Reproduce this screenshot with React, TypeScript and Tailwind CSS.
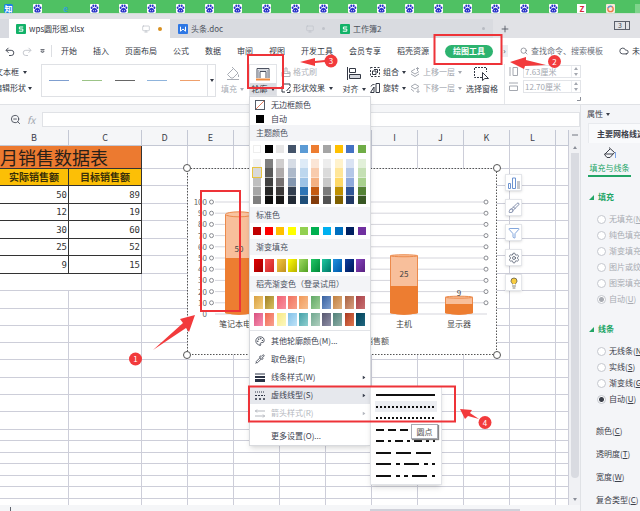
import React from 'react';
import { Brush, Cloud, Filter, Lightbulb, Monitor, Palette, Pipette, Plus, Search, Settings, ZoomOut } from 'lucide-react';
import { clsx } from 'clsx';

const menuTabs = ['开始', '插入', '页面布局', '公式', '数据', '审阅', '视图', '开发工具', '会员专享', '稻壳资源'];

const favicons = ['知', 'paw', 'e', ...Array(17).fill('paw'), 'Z', 'ring', 'leaf'];

const galleryLines = ['bg-[#7f9fd0]', 'bg-[#9cc487]', 'bg-[#666666]', 'bg-[#8fb4dc]', 'bg-[#efa06c]'];

const themeColors = ['bg-white', 'bg-black', 'bg-[#e7e6e6]', 'bg-[#44546a]', 'bg-[#5b9bd5]', 'bg-[#ed7d31]', 'bg-[#a5a5a5]', 'bg-[#ffc000]', 'bg-[#4472c4]', 'bg-[#70ad47]'];

const shades = [
  ['bg-[#f2f2f2]', 'bg-[#7f7f7f]', 'bg-[#d0cece]', 'bg-[#d6dce5]', 'bg-[#deebf7]', 'bg-[#fbe5d6]', 'bg-[#ededed]', 'bg-[#fff2cc]', 'bg-[#dae3f3]', 'bg-[#e2f0d9]'],
  ['bg-[#d9d9d9]', 'bg-[#595959]', 'bg-[#afabab]', 'bg-[#adb9ca]', 'bg-[#bdd7ee]', 'bg-[#f8cbad]', 'bg-[#dbdbdb]', 'bg-[#ffe699]', 'bg-[#b4c7e7]', 'bg-[#c5e0b4]'],
  ['bg-[#bfbfbf]', 'bg-[#404040]', 'bg-[#767171]', 'bg-[#8497b0]', 'bg-[#9dc3e6]', 'bg-[#f4b183]', 'bg-[#c9c9c9]', 'bg-[#ffd966]', 'bg-[#8faadc]', 'bg-[#a9d18e]'],
  ['bg-[#a6a6a6]', 'bg-[#262626]', 'bg-[#3b3838]', 'bg-[#333f50]', 'bg-[#2e75b6]', 'bg-[#c55a11]', 'bg-[#7b7b7b]', 'bg-[#bf9000]', 'bg-[#2f5597]', 'bg-[#548235]'],
  ['bg-[#7f7f7f]', 'bg-[#0d0d0d]', 'bg-[#181717]', 'bg-[#222a35]', 'bg-[#1f4e79]', 'bg-[#843c0c]', 'bg-[#525252]', 'bg-[#7f6000]', 'bg-[#203864]', 'bg-[#385723]'],
];

const standardColors = ['bg-[#c00000]', 'bg-[#ff0000]', 'bg-[#ffc000]', 'bg-[#ffff00]', 'bg-[#92d050]', 'bg-[#00b050]', 'bg-[#00b0f0]', 'bg-[#0070c0]', 'bg-[#002060]', 'bg-[#7030a0]'];

const gradients = [
  'from-[#e00000] to-[#a00000]', 'from-[#f55050] to-[#d02020]', 'from-[#f5c840] to-[#c09020]', 'from-[#ffff00] to-[#b8b000]', 'from-[#a0dc60] to-[#50a020]',
  'from-[#20c868] to-[#008838]', 'from-[#20c8a0] to-[#007868]', 'from-[#2090e0] to-[#0058a8]', 'from-[#1040a0] to-[#001858]', 'from-[#8844c0] to-[#582080]',
];

const shellGradients = [
  ['from-[#d8a040] to-[#f4d080]', 'from-[#a08020] to-[#d8c060]', 'from-[#f06070] to-[#f890a0]', 'from-[#f07060] to-[#f8a088]', 'from-[#f09858] to-[#f8c090]', 'from-[#60a868] to-[#a0d098]', 'from-[#3860a0] to-[#80a0d0]', 'from-[#c08040] to-[#e0b080]', 'from-[#a86040] to-[#d8a080]', 'from-[#a84048] to-[#c87070]'],
  ['from-[#d85080] to-[#f890b0]', 'from-[#f06850] to-[#f8a090]', 'from-[#f8e880] to-[#fcf8c0]', 'from-[#80c0e8] to-[#c0e4f8]', 'from-[#40a0a8] to-[#90d0d0]', 'from-[#70a890] to-[#b0d0c0]', 'from-[#585870] to-[#9090a8]', 'from-[#508078] to-[#90b0a8]', 'from-[#a83820] to-[#e07850]', 'from-[#004058] to-[#206880]'],
];

const dashes = [
  { name: '实线', pattern: '' },
  { name: '圆点', pattern: '2 2' },
  { name: '方点', pattern: '2 2' },
  { name: '短划线', pattern: '8 4' },
  { name: '划线点', pattern: '8 4 3 4' },
  { name: '长划线', pattern: '15 5' },
  { name: '长划线点', pattern: '15 5 4 4' },
  { name: '长划线点点', pattern: '15 5 4 4 4 4' },
];

const columns = ['B', 'C', 'D', 'E', 'F', 'G', 'H', 'I', 'J', 'K', 'L', ''];
const sales = [[50, 89], [12, 19], [30, 60], [25, 52], [9, 15]];
const emptyRows = [
  'h-[17px]', 'h-[18px]', 'h-[17px]', 'h-[17px]', 'h-[17px]', 'h-[18px]', 'h-[17px]', 'h-[17px]', 'h-[18px]',
  'h-[11px]', 'h-[12px]', 'h-[11px]', 'h-[12px]', 'h-[11px]', 'h-[12px]', 'h-[8px]',
];

const bars = [
  { label: '笔记本电脑', x: 52, actual: 50, target: 89 },
  { label: '主机', x: 217, actual: 25, target: 52 },
  { label: '显示器', x: 272, actual: 9, target: 15 },
];

function Caret({ className }: { className?: string }) {
  return (
    <svg viewBox="0 0 4 3" className={clsx('w-1 h-[3px] shrink-0 fill-current', className)}>
      <path d="M0 0h4L2 3z" />
    </svg>
  );
}

function Favicon({ kind }: { kind: string }) {
  if (kind === 'paw') {
    return (
      <svg viewBox="0 0 9 9" className="w-[9px] h-[9px] shrink-0">
        <rect width="9" height="9" rx="1" fill="#fff" />
        <g fill="#2a34c8">
          <ellipse cx="1.6" cy="3.8" rx="1" ry="1.3" />
          <ellipse cx="3.3" cy="1.8" rx="1" ry="1.4" />
          <ellipse cx="5.7" cy="1.8" rx="1" ry="1.4" />
          <ellipse cx="7.4" cy="3.8" rx="1" ry="1.3" />
          <path d="M4.5 3.8c1.3 0 1.6 1.2 2.6 2 1 1 .4 2.6-1 2.6H2.9c-1.4 0-2-1.600-1-2.600 1-.8 1.300-2 2.600-2z" />
        </g>
        <path d="M3.500 6.200v1M5.500 6.200v1" stroke="#fff" strokeWidth=".8" />
      </svg>
    );
  }
  if (kind === 'ring') {
    return (
      <svg viewBox="0 0 9 9" className="w-[9px] h-[9px] shrink-0">
        <rect width="9" height="9" rx="1" fill="#f6e9dc" />
        <circle cx="4.500" cy="5" r="2.700" fill="none" stroke="#ec7a4a" strokeWidth="1.300" />
        <path d="M2 4a2.700 2.700 0 0 1 4-1.400" fill="none" stroke="#5a98d8" strokeWidth="1.300" />
      </svg>
    );
  }
  return (
    <span
      className={clsx(
        'w-[9px] h-[9px] shrink-0 text-[8px] leading-[9px] font-bold text-center overflow-hidden',
        kind === '知' && 'bg-[#1a7fe8] text-white rounded-xs',
        kind === 'e' && 'text-[#2f9fd8]',
        kind === 'Z' && 'bg-white text-[#d8283c]',
        kind === 'leaf' && 'bg-[#7fd48c]'
      )}
    >
      {kind === 'leaf' ? '' : kind}
    </span>
  );
}

function FileIcon({ kind }: { kind: 'sheet' | 'doc' }) {
  return (
    <svg viewBox="0 0 10 10" className="w-2.5 h-2.5 shrink-0">
      <rect width="10" height="10" rx="1" fill={kind === 'sheet' ? '#12b268' : '#2f78e4'} />
      {kind === 'sheet' ? (
        <path d="M7.200 3H3.400v2h3.400v2.200H2.800" fill="none" stroke="#fff" strokeWidth="1" />
      ) : (
        <path d="M2.500 2.700v4.500L5 5l2.500 2.200V2.700" fill="none" stroke="#fff" strokeWidth="1" />
      )}
    </svg>
  );
}

function BucketIcon({ className }: { className?: string }) {
  return (
    <svg viewBox="0 0 14 14" className={clsx('w-3.5 h-3.5', className)} fill="none" stroke="currentColor">
      <path d="M6 1.500l5.500 5L7 11.500H4L1.500 8.500 7 3M1.500 8H10" />
      <path d="M12.500 6v6" stroke="#7ba4e8" />
    </svg>
  );
}

function TitleTabs() {
  return (
    <header>
      <div className="h-[13px] bg-[#4fc163] flex items-end justify-between pl-1 -mr-1 overflow-hidden">
        {favicons.map((kind, idx) => <Favicon key={idx} kind={kind} />)}
      </div>
      <div className="h-[25px] bg-[#e1e2e6] flex items-end border-t border-[#cfe0d4]">
        <div className="w-[9px] h-[19px] bg-[#d8dae0]" />
        <div className="w-[161px] h-[19px] bg-white flex items-center pl-[7px] pr-2">
          <FileIcon kind="sheet" />
          <span className="ml-[3px] text-[#30343c]">wps圆形图.xlsx</span>
          <Monitor className="ml-auto text-[#b8bcc4]" size={8} />
          <span className="ml-2 w-1 h-1 rounded-full bg-[#d89020]" />
        </div>
        <div className="w-[163px] h-[19px] bg-[#d9dbe0] flex items-center pl-2 pr-2">
          <FileIcon kind="doc" />
          <span className="ml-[3px]">头条.doc</span>
          <Monitor className="ml-auto text-[#c0c3ca]" size={8} />
          <span className="ml-2 w-[3px] h-[3px] rounded-full bg-[#c0c3ca]" />
        </div>
        <div className="w-[160px] h-[19px] bg-[#d9dbe0] flex items-center pl-[7px] pr-2">
          <FileIcon kind="sheet" />
          <span className="ml-[3px]">工作簿2</span>
          <span className="ml-auto w-[3px] h-[3px] rounded-full bg-[#b8bbc2]" />
        </div>
        <button className="w-6 h-[19px] flex items-center justify-center" aria-label="+">
          <Plus size={10} />
        </button>
        <div className="ml-auto mr-2.5 mb-2 flex border border-[#5c616c] h-[9px] w-4 text-[7px] leading-[7px]">
          <span className="flex-1 text-center">3</span>
          <span className="w-1 border-l border-[#5c616c]" />
        </div>
      </div>
    </header>
  );
}

function MenuBar() {
  return (
    <nav className="h-[26px] bg-white flex items-center overflow-hidden whitespace-nowrap text-[#333844]">
      <div className="w-[61px] shrink-0 flex items-center pl-[5px]">
        <svg viewBox="0 0 10 9" className="w-2.5 h-[9px]" fill="none" stroke="#4c515c">
          <path d="M3.500 .8L1 3.300l2.500 2.500M1 3.300h5.200a2.600 2.600 0 0 1 0 5.200H4" />
        </svg>
        <svg viewBox="0 0 10 9" className="w-2.5 h-[9px] ml-[7px]" fill="none" stroke="#c6c9cf">
          <path d="M6.500 .8L9 3.300 6.500 5.800M9 3.300H3.800a2.600 2.600 0 0 0 0 5.200H6" />
        </svg>
        <svg viewBox="0 0 5 5" className="w-[5px] h-[5px] ml-2" fill="none" stroke="#4c515c">
          <path d="M.5 .5h4M.8 2l1.700 2 1.700-2z" strokeWidth=".8" />
        </svg>
        <span className="w-px h-3 ml-1.5 bg-[#dcdee2]" />
      </div>
      <div className="flex items-center gap-4">
        {menuTabs.map((tab) => <button key={tab}>{tab}</button>)}
        <button className="h-[13px] px-2 rounded-full bg-[#2db36f] text-white font-bold">绘图工具</button>
      </div>
      <button className="ml-2 w-[7px] h-3 bg-[#eceef1] text-[8px] leading-[10px]">›</button>
      <label className="ml-3 flex items-center gap-[3px] text-[#6c717c]">
        <Search size={8} />
        <input className="w-[82px] placeholder-[#6c717c] outline-none" placeholder="查找命令、搜索模板" />
      </label>
      <button className="ml-1.5 flex items-center gap-[3px] shrink-0">
        <Cloud size={10} />
        未
      </button>
    </nav>
  );
}

const menuSwatch = 'w-2 h-2 shrink-0';

function SectionTitle({ children }: { children: React.ReactNode }) {
  return <h3 className="h-4 leading-4 pl-1.5 bg-[#f3f4f7] text-[#4a5060]">{children}</h3>;
}

function SwatchRow({ colors, className }: { colors: string[]; className?: string }) {
  return (
    <div className={clsx('flex justify-between', className)}>
      {colors.map((c) => <button key={c} className={clsx(menuSwatch, c)} aria-label="颜色" />)}
    </div>
  );
}

function GradientRow({ colors }: { colors: string[] }) {
  return (
    <div className="flex justify-between pl-1 pr-[5px]">
      {colors.map((c) => <button key={c} className={clsx('w-[9px] h-[13px] bg-linear-to-br', c)} aria-label="渐变" />)}
    </div>
  );
}

function DashMenu() {
  return (
    <div className="absolute left-full top-0 w-[72px] bg-white shadow-md border border-[#e2e4e8] pt-0.5 pb-[3px]">
      {dashes.map((dash, idx) => (
        <button
          key={dash.name}
          aria-label={dash.name}
          className={clsx('w-[62px] ml-1 flex items-center', idx % 2 ? 'h-[11px]' : 'h-3', idx === 1 && 'bg-[#eceef2]')}
        >
          <svg className="w-full h-[2px]" viewBox="0 0 62 2">
            <path d="M1 1h59" stroke="#111" strokeWidth="2" strokeDasharray={dash.pattern} />
          </svg>
        </button>
      ))}
      <span className="absolute left-10 top-[37px] w-[27px] h-[15px] leading-[13px] text-center bg-white border border-[#a8abb2] shadow-[1px_1px_1px_#888] text-[#555]">
        圆点
      </span>
    </div>
  );
}

function OutlineMenu() {
  return (
    <div className="absolute z-20 left-0 top-full w-[122px] bg-white border border-[#d8dade] shadow-md text-[#3c4250] whitespace-nowrap">
      <button className="flex items-center w-full h-[15px] pl-[5px] gap-1.5">
        <svg viewBox="0 0 10 10" className="w-2.5 h-2.5">
          <rect x=".5" y=".5" width="9" height="9" fill="#fff" stroke="#555b66" />
          <path d="M1 9l8-8" stroke="#e07c5c" />
        </svg>
        无边框颜色
      </button>
      <button className="flex items-center w-full h-[13px] pl-1.5 gap-[7px]">
        <span className="w-2 h-2 bg-black" />
        自动
      </button>
      <SectionTitle>主题颜色</SectionTitle>
      <div className="pl-[3px] pr-1 pt-1 pb-[3px]">
        <div className="flex justify-between mb-1.5">
          {themeColors.map((c) => (
            <button key={c} className={clsx(menuSwatch, c, c === 'bg-white' && 'border border-[#eeeeee]')} aria-label="颜色" />
          ))}
        </div>
        {shades.map((row, idx) => (
          <div key={idx} className="flex justify-between">
            {row.map((c, col) => (
              <button
                key={c}
                className={clsx('w-2 h-[9px]', c, idx === 1 && col === 0 && 'relative outline-1 outline-[#e8c440]', idx > 1 && 'border-t border-white/60')}
                aria-label="颜色"
              />
            ))}
          </div>
        ))}
      </div>
      <SectionTitle>标准色</SectionTitle>
      <SwatchRow colors={standardColors} className="pl-[3px] pr-1 py-1" />
      <SectionTitle>渐变填充</SectionTitle>
      <div className="py-1">
        <GradientRow colors={gradients} />
      </div>
      <SectionTitle>稻壳渐变色（登录试用）</SectionTitle>
      <div className="flex flex-col gap-1 py-1 border-b border-[#e2e4e8]">
        {shellGradients.map((row, idx) => <GradientRow key={idx} colors={row} />)}
      </div>
      <button className="flex items-center w-full h-[18px] mt-px pl-[5px] gap-1.5">
        <Palette size={10} />
        其他轮廓颜色(M)...
      </button>
      <button className="flex items-center w-full h-[18px] pl-[5px] gap-1.5">
        <Pipette size={10} />
        取色器(E)
      </button>
      <button className="flex items-center w-full h-[18px] pl-[5px] pr-1 gap-1.5">
        <svg viewBox="0 0 10 9" className="w-2.5 h-[9px]" stroke="#2c3446">
          <path d="M0 1h10" />
          <path d="M0 4h10" strokeWidth="2" />
          <path d="M0 7.500h10" strokeWidth="3" />
        </svg>
        线条样式(W)
        <Caret className="ml-auto -rotate-90" />
      </button>
      <div className="relative">
        <button className="flex items-center w-full h-[18px] pl-[5px] pr-1 gap-1.5 bg-[#e6e8ed]">
          <svg viewBox="0 0 10 9" className="w-2.5 h-[9px]" stroke="#2c3446">
            <path d="M0 1h10" strokeDasharray="1 1" />
            <path d="M0 4.500h10" strokeDasharray="2 1" />
            <path d="M0 8h10" strokeDasharray="2 2" strokeWidth="1.500" />
          </svg>
          虚线线型(S)
          <Caret className="ml-auto -rotate-90" />
        </button>
        <DashMenu />
      </div>
      <button className="flex items-center w-full h-[18px] pl-[5px] pr-1 gap-1.5 text-[#b4b7be]">
        <svg viewBox="0 0 10 9" className="w-2.5 h-[9px]" fill="none" stroke="currentColor">
          <path d="M0 2h10M2 .5L.5 2 2 3.500M0 7h10M8 5.500L9.500 7 8 8.500" />
        </svg>
        箭头样式(R)
        <Caret className="ml-auto -rotate-90" />
      </button>
      <button className="flex items-center w-full h-[18px] mt-[5px] pl-[21px]">更多设置(O)...</button>
    </div>
  );
}

function Ribbon() {
  return (
    <div className="h-10 bg-white flex items-start whitespace-nowrap text-[#333844]">
      <div className="w-[41px] shrink-0 flex flex-col">
        <button className="h-4 -ml-[5px] flex items-center gap-1">文本框 <Caret /></button>
        <button className="h-4 -ml-1.5 flex items-center gap-0.5">编辑形状 <Caret /></button>
      </div>
      <div className="w-[175px] h-[33px] shrink-0 border border-[#dfe1e5] flex items-center">
        <div className="flex-1 flex justify-between px-[7px]">
          {galleryLines.map((c) => <button key={c} className={clsx('w-5 h-px', c)} aria-label="线条" />)}
        </div>
        <button className="w-2 h-full border-l border-[#dfe1e5] flex items-center justify-center" aria-label="更多">
          <Caret />
        </button>
      </div>
      <button className="w-[33px] shrink-0 h-8 flex flex-col items-center justify-between pt-0.5 text-[#a9adb5]">
        <svg viewBox="0 0 14 15" className="w-3.5 h-[15px]" fill="none" stroke="currentColor">
          <path d="M6 1l6 6-5 5H5L1.500 8.500 7 3M12.500 8.500v2.500M1 13.500h12" />
        </svg>
        <span className="flex items-center gap-[3px] leading-[14px]">填充 <Caret /></span>
      </button>
      <div className="relative w-7 shrink-0">
        <button className="w-full h-8 flex flex-col items-center border border-[#e2e4e8]">
          <svg viewBox="0 0 14 14" className="w-3.5 h-3.5 mt-0.5 shrink-0" fill="none" stroke="#4c5261">
            <path d="M1 11V1.500h12V11M4 11V4.500h6V11" />
            <path d="M2.500 11V3h9v8" stroke="#b0b5c0" />
            <path d="M0 12.500h14" stroke="#ee8a3c" strokeWidth="2" />
          </svg>
          <span className="mt-0.5 w-full h-3.5 bg-[#dcdee3] flex items-center justify-center gap-[3px]">轮廓 <Caret /></span>
        </button>
        <OutlineMenu />
      </div>
      <div className="w-[63px] shrink-0 pl-1 flex flex-col">
        <button className="h-4 flex items-center gap-0.5 text-[#b0b3ba]">
          <svg viewBox="0 0 10 10" className="w-2.5 h-2.5" fill="none" stroke="currentColor">
            <path d="M4 1h2v4h3v4.500H1V5h3zM1 6.500h8" />
          </svg>
          格式刷
        </button>
        <button className="h-4 flex items-center gap-0.5">
          <svg viewBox="0 0 10 10" className="w-2.5 h-2.5" fill="none" stroke="currentColor">
            <path d="M4 9H1V3l2-2h6v2M3 1L1 3M9.500 3.500L5.500 8M6 9.500h3V7" />
          </svg>
          形状效果 <Caret className="ml-0.5" />
        </button>
      </div>
      <button className="w-7 shrink-0 h-8 flex flex-col items-center justify-between pt-[3px]">
        <svg viewBox="0 0 14 13" className="w-3.5 h-[13px]" fill="none" stroke="currentColor">
          <path d="M.5 0v13M2.500 1.500h6v4h-6z" />
          <path d="M2.500 7.500h11v4h-11z" fill="#d4d6dc" />
        </svg>
        <span className="flex items-center gap-[3px] leading-[14px]">对齐 <Caret /></span>
      </button>
      <div className="w-[42px] shrink-0 pl-0.5 flex flex-col">
        <button className="h-4 flex items-center gap-[3px]">
          <svg viewBox="0 0 10 10" className="w-2.5 h-2.5" fill="none" stroke="currentColor">
            <path d="M.5 .5h9v9h-9z" strokeDasharray="2 1.500" />
            <path d="M4 2.500h3.500V6M2.500 4h3.500v3.500H2.500z" />
          </svg>
          组合 <Caret />
        </button>
        <button className="h-4 flex items-center gap-[3px]">
          <svg viewBox="0 0 10 10" className="w-2.5 h-2.5" fill="none" stroke="currentColor">
            <path d="M6 .5h3.500v9H6zM4 4v5.500H.5zM1 3.500C1.500 2 2.500 1.500 4.500 1.500" />
          </svg>
          旋转 <Caret />
        </button>
      </div>
      <div className="w-[54px] shrink-0 flex flex-col text-[#a4a8b0]">
        {['上移一层', '下移一层'].map((label, idx) => (
          <button key={label} className="h-4 flex items-center gap-[3px]">
            <svg viewBox="0 0 10 10" className="w-2.5 h-2.5" fill="none" stroke="currentColor">
              <path d={idx ? 'M5 1l4 2.500L5 6 1 3.500zM1 6l3 2.500M8 5.500v4M6.500 8L8 9.500 9.500 8' : 'M5 2L1 4.500 5 7l4-2.500M1 7l4 2.500L9 7M7.500 4V.5M6 2L7.500 .5 9 2'} />
            </svg>
            {label} <Caret />
          </button>
        ))}
      </div>
      <button className="w-9 shrink-0 h-8 flex flex-col items-center justify-between pt-[3px]">
        <svg viewBox="0 0 16 15" className="w-4 h-[15px]" fill="none" stroke="currentColor">
          <path d="M8 10.500H.5V.5h12V5" strokeDasharray="2 1" />
          <path d="M8.500 5.500v8l2.300-2h3.700z" fill="#fff" />
        </svg>
        <span className="leading-[14px]">选择窗格</span>
      </button>
      <div className="ml-1 pl-1 border-l border-[#e4e6ea] h-10 flex flex-col gap-0.5 pt-px text-[#a4a8b0]">
        {[['高', '7.63厘米'], ['宽', '12.70厘米']].map(([name, value], idx) => (
          <label key={name} className="flex items-center gap-[5px]">
            <svg viewBox="0 0 9 9" className="w-[9px] h-[9px]" fill="none" stroke="currentColor">
              {idx ? <path d="M.5 4h8v4.500h-8zM0 1h9" /> : <path d="M4 .5h4.500v8H4zM1 0v9" />}
            </svg>
            <span className="flex w-[58px] h-[13px] border border-[#e2e4e8]">
              <input aria-label={name} className="min-w-0 flex-1 pl-px leading-[11px] outline-none" defaultValue={value} />
              <span className="w-[9px] flex flex-col items-center justify-center gap-[3px] border-l border-[#eceef1]">
                <Caret className="rotate-180" />
                <Caret />
              </span>
            </span>
          </label>
        ))}
        <svg viewBox="0 0 4 4" className="w-1 h-1 ml-auto mt-0.5" stroke="#8a8e98" fill="none">
          <path d="M3.500 0v3.500H0" />
        </svg>
      </div>
    </div>
  );
}

function Chart() {
  const zero = 146;
  const scale = 1.12;
  return (
    <svg viewBox="0 0 310 187" className="absolute left-[187px] top-[38px] w-[310px] h-[187px] overflow-visible" fontSize="8">
      <rect x=".5" y=".5" width="309" height="186" fill="#fff" stroke="#555" strokeDasharray="1.500 1.500" />
      {Array.from({ length: 11 }, (_, i) => {
        const y = zero - i * 10 * scale;
        return (
          <g key={i}>
            <path d={`M28 ${y}H300`} stroke="#d5d5dc" />
            <text x="20" y={y + 3} textAnchor="end" fill="#666">{i * 10}</text>
          </g>
        );
      })}
      {bars.map((bar) => {
        const top = zero - bar.target * scale;
        const mid = zero - bar.actual * scale;
        return (
          <g key={bar.label}>
            <path d={`M${bar.x - 13.5} ${top}V${zero - 1}Q${bar.x} ${zero + 2} ${bar.x + 13.5} ${zero - 1}V${top}`} fill="#f8bf9b" stroke="#ec8a4c" />
            <ellipse cx={bar.x} cy={top} rx="13.500" ry={bar.target > 80 ? 2.5 : 1} fill="#f8c3a0" stroke="#ec8a4c" />
            <path d={`M${bar.x - 14} ${mid}V${zero - 1}Q${bar.x} ${zero + 2} ${bar.x + 14} ${zero - 1}V${mid}z`} fill="#ed7d31" />
            <text x={bar.x} y={bar.actual > 9 ? (top + mid) / 2 + (bar.target > 80 ? 16 : 6) : top - 1} textAnchor="middle" fill="#444">{bar.actual}</text>
            <text x={bar.x} y={zero + 13} textAnchor="middle" fill="#444">{bar.label}</text>
          </g>
        );
      })}
      {Array.from({ length: 10 }, (_, i) => (
        <g key={i} fill="#fff" stroke="#8a8c92">
          <circle cx="24.500" cy={zero - (i + 1) * 10 * scale} r="2" />
          <circle cx="299" cy={zero - (i + 1) * 10 * scale} r="2" />
        </g>
      ))}
      <text x="202" y="176" textAnchor="end" fill="#555">销售额</text>
      {[[0, 0], [310, 0], [0, 187], [310, 187]].map(([x, y]) => (
        <circle key={`${x}-${y}`} cx={x} cy={y} r="3.500" fill="#fff" stroke="#555" />
      ))}
    </svg>
  );
}

function ChartTools() {
  const box = 'w-[17px] h-[17px] bg-white border border-[#e4e6ea] shadow flex items-center justify-center';
  return (
    <div className="absolute left-[505px] top-[44px] flex flex-col gap-2">
      <button className={box} aria-label="图表元素">
        <svg viewBox="0 0 12 12" className="w-3 h-3" fill="none" stroke="#6c93d0">
          <path d="M.5 6.500h2v5h-2zM4.500 1h3v10.500h-3z" />
          <path d="M9 5h3M9 7h3M9 9h3M9 11h3" stroke="#8a8e98" />
        </svg>
      </button>
      <button className={box} aria-label="图表样式"><Brush size={12} strokeWidth={1.5} className="text-[#5a6a90]" /></button>
      <button className={box} aria-label="图表筛选器"><Filter size={12} strokeWidth={1.5} className="text-[#5a88d0]" /></button>
      <button className={box} aria-label="设置"><Settings size={12} strokeWidth={1.5} className="text-[#4c5668]" /></button>
      <button className={box} aria-label="提示"><Lightbulb size={12} strokeWidth={1.5} className="text-[#5a5648] fill-[#f8cc40]" /></button>
    </div>
  );
}

function Sheet() {
  const cell = 'border-r border-b border-[#cdced9] p-0';
  const dataCell = 'border-r border-b border-[#333] p-0';
  const rest = (
    <>
      {columns.slice(2).map((c, idx) => <td key={idx} className={cell} />)}
    </>
  );
  return (
    <div className="relative flex-1 min-w-0 overflow-hidden bg-white">
      <table className="table-fixed w-full border-separate border-spacing-0">
        <colgroup>
          {columns.map((c, idx) => (
            <col key={idx} className={idx === 0 ? 'w-[69px]' : idx === 1 ? 'w-[73px]' : c ? 'w-[46px]' : ''} />
          ))}
        </colgroup>
        <thead>
          <tr>
            {columns.map((c, idx) => (
              <th key={idx} className="h-4 p-0 bg-[#f5f6f8] border-r border-b border-[#c4c8d4] text-[9px] leading-[15px] font-normal text-[#3c404a]">{c}</th>
            ))}
          </tr>
        </thead>
        <tbody>
          <tr>
            <td colSpan={2} className={clsx(dataCell, 'h-[23px] bg-[#ec7a30] text-[18px] leading-[22px] text-[#2a2018] whitespace-nowrap')}>月销售数据表</td>
            {rest}
          </tr>
          <tr>
            {['实际销售额', '目标销售额'].map((name) => (
              <td key={name} className={clsx(dataCell, 'h-[17px] bg-[#fcbf06] text-[10px] leading-4 font-bold text-center text-[#3a3008]')}>{name}</td>
            ))}
            {rest}
          </tr>
          {sales.map((row, idx) => (
            <tr key={idx}>
              {row.map((value) => (
                <td key={value} className={clsx(dataCell, idx % 2 ? 'h-[17px]' : 'h-[18px]', 'pr-px text-right font-[DejaVu_Sans_Mono,monospace] text-[9px] leading-4 text-[#333]')}>{value}</td>
              ))}
              {rest}
            </tr>
          ))}
          {emptyRows.map((height, idx) => (
            <tr key={idx}>
              {idx === 0 ? <td colSpan={2} className={clsx(cell, height)} /> : (
                <>
                  <td className={clsx(cell, height)} />
                  <td className={clsx(cell, height)} />
                </>
              )}
              {rest}
            </tr>
          ))}
        </tbody>
      </table>
      <Chart />
      <ChartTools />
    </div>
  );
}

function PanelRadios({ name, options, disabled }: { name: string; options: string[][]; disabled?: boolean }) {
  return (
    <div className={clsx('flex flex-col pl-4', disabled ? 'text-[#a8abb2]' : 'text-[#3c404a]')}>
      {options.map(([label, key], idx) => (
        <label key={label} className="h-4 flex items-center gap-[3px]">
          <input
            type="radio"
            name={name}
            disabled={disabled}
            defaultChecked={idx === options.length - 1}
            className="appearance-none shrink-0 w-[9px] h-[9px] rounded-full border border-[#c4c7ce] bg-white checked:bg-[radial-gradient(circle,currentColor_2px,white_3px)]"
          />
          <span>{label}(<u>{key}</u>)</span>
        </label>
      ))}
    </div>
  );
}

function PropertyPanel() {
  return (
    <aside className="w-[60px] shrink-0 overflow-hidden whitespace-nowrap bg-[#f4f5f8] border-l border-[#e0e2e6] border-t text-[#3c404a]">
      <h2 className="h-[18px] pl-1.5 flex items-center gap-[3px]">属性 <Caret /></h2>
      <div className="ml-[7px] h-5 pl-2 leading-5 font-bold bg-[#f9fafc] border-l border-t border-[#e8eaee]">主要网格线选项</div>
      <div className="pl-[22px] pt-[3px]">
        <BucketIcon />
      </div>
      <button className="ml-[7px] mt-px w-[43px] h-4 block text-center text-[#22a566] border-b-2 border-[#22a566]">填充与线条</button>
      <h3 className="mt-3 h-4 pl-2 flex items-center gap-1 font-bold text-[#22a566]">
        <svg viewBox="0 0 5 5" className="w-[5px] h-[5px] fill-current"><path d="M5 0v5H0z" /></svg>
        填充
      </h3>
      <div className="mt-1.5">
        <PanelRadios name="fill" disabled options={[['无填充', 'N'], ['纯色填充', 'S'], ['渐变填充', 'G'], ['图片或纹理填充', 'P'], ['图案填充', 'A'], ['自动', 'U']]} />
      </div>
      <h3 className="mt-3.5 h-4 pl-2 flex items-center gap-1 font-bold text-[#22a566]">
        <svg viewBox="0 0 5 5" className="w-[5px] h-[5px] fill-current"><path d="M5 0v5H0z" /></svg>
        线条
      </h3>
      <div className="mt-1.5">
        <PanelRadios name="line" options={[['无线条', 'N'], ['实线', 'S'], ['渐变线', 'G'], ['自动', 'U']]} />
      </div>
      <dl className="mt-3 pl-[15px]">
        {[['颜色', 'C'], ['透明度', 'T'], ['宽度', 'W'], ['复合类型', 'C']].map(([label, key]) => (
          <dt key={label} className="h-[23px] leading-[15px] pt-1">{label}(<u>{key}</u>)</dt>
        ))}
      </dl>
    </aside>
  );
}

// Red step marks drawn over the window
function Annotations() {
  const steps = [
    { n: 1, x: 135.5, y: 359 },
    { n: 2, x: 554.5, y: 61.5 },
    { n: 3, x: 331, y: 61 },
    { n: 4, x: 485, y: 422.5 },
  ];
  return (
    <svg viewBox="0 0 640 511" className="absolute z-30 left-0 top-0 w-[640px] h-[511px] pointer-events-none">
      <g fill="none" stroke="#ee3338" strokeWidth="2">
        <rect x="201" y="191" width="39" height="120" />
        <rect x="434.500" y="35" width="67" height="29" />
        <rect x="248" y="55" width="35" height="33" />
        <rect x="249" y="386.500" width="206" height="35" />
      </g>
      <g fill="#f23a3c">
        <path d="M195 315L180 319l3 4-30 27 33-22 3 4z" />
        <path d="M510 62l16-5v3l20 5-21 1-1 3z" />
        <path d="M300 62l15-4v3l10-1v2l-10 1v3z" />
        <path d="M460 409l12 1-2 3 9 6-11-3-3 3z" />
        {steps.map((s) => <circle key={s.n} cx={s.x} cy={s.y} r="6.500" />)}
      </g>
      <g fill="#fff" fontSize="8" textAnchor="middle">
        {steps.map((s) => <text key={s.n} x={s.x} y={s.y + 3}>{s.n}</text>)}
      </g>
    </svg>
  );
}

export default function App() {
  return (
    <div className="relative h-screen overflow-hidden flex flex-col bg-[#f5f6f8] font-['Noto_Sans_CJK_SC',sans-serif] text-[8px] leading-3 text-[#4c515c]">
      <TitleTabs />
      <MenuBar />
      <Ribbon />
      <main className="flex-1 min-h-0 flex">
        <div className="flex-1 min-w-0 flex flex-col">
          <div className="h-[26px] shrink-0 flex items-center border-t border-[#e0e2e6] pl-2.5 pt-1">
            <ZoomOut size={11} />
            <span className="w-[21px] pl-1.5 text-[10px] italic text-[#a4a8b0]">fx</span>
            <input aria-label="编辑栏" className="flex-1 min-w-0 h-[15px] bg-white border border-[#e0e2e6] outline-none" />
          </div>
          <div className="flex-1 min-h-0 flex">
            <Sheet />
            <div className="w-[11px] shrink-0 flex flex-col items-center bg-[#f0f1f4] pt-1">
              <span className="w-1.5 h-0.5 bg-[#b0b3ba]" />
              <Caret className="mt-2.5 rotate-180 text-[#8a8e98]" />
              <span className="mt-1 w-2 h-[325px] rounded-b bg-[#d9dbe1]" />
              <Caret className="mt-auto mb-1 text-[#8a8e98]" />
            </div>
          </div>
          <div className="h-1.5 shrink-0 flex items-end pl-2.5">
            <span className="w-px h-1 bg-[#60646e]" />
            <span className="ml-[359px] w-[150px] h-0.5 bg-[#d0d1da]" />
          </div>
        </div>
        <PropertyPanel />
      </main>
      <Annotations />
    </div>
  );
}
